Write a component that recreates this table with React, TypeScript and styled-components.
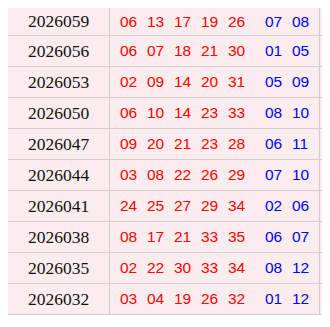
import React from 'react';
import styled, { createGlobalStyle } from 'styled-components';

const Global = createGlobalStyle`
  body {
    margin: 8px;
    background: #fff;
  }
`;

const Card = styled.div`
  width: 314px;
  overflow: hidden;
  background: #fbeded;
  box-shadow: 0 2px 6px rgba(0, 0, 0, 0.12);
`;

const Row = styled.div`
  display: grid;
  grid-template-columns: 102px 210px 40px;
  height: 31px;
  border-bottom: 1px solid #d3cdcd;
  box-sizing: border-box;
  width: 352px;

  &:first-child {
    height: 28px;
  }
`;

const Issue = styled.div`
  display: flex;
  align-items: center;
  justify-content: center;
  border-right: 1px solid #d3cdcd;
  font-family: 'Liberation Serif', serif;
  font-size: 17.5px;
  color: #111;
`;

const Balls = styled.div`
  display: flex;
  align-items: center;
  gap: 10px;
  padding-left: 10px;
  border-right: 1px solid #d3cdcd;
`;

const Ball = styled.span<{ $blue?: boolean; $first?: boolean }>`
  width: 17px;
  font-family: 'Liberation Sans', sans-serif;
  font-size: 15.5px;
  color: ${(p) => (p.$blue ? '#0000ff' : '#ff0000')};
  margin-left: ${(p) => (p.$first ? '10px' : '0')};
`;

const data: [string, string[], string[]][] = [
  ['2026059', ['06', '13', '17', '19', '26'], ['07', '08']],
  ['2026056', ['06', '07', '18', '21', '30'], ['01', '05']],
  ['2026053', ['02', '09', '14', '20', '31'], ['05', '09']],
  ['2026050', ['06', '10', '14', '23', '33'], ['08', '10']],
  ['2026047', ['09', '20', '21', '23', '28'], ['06', '11']],
  ['2026044', ['03', '08', '22', '26', '29'], ['07', '10']],
  ['2026041', ['24', '25', '27', '29', '34'], ['02', '06']],
  ['2026038', ['08', '17', '21', '33', '35'], ['06', '07']],
  ['2026035', ['02', '22', '30', '33', '34'], ['08', '12']],
  ['2026032', ['03', '04', '19', '26', '32'], ['01', '12']],
];

export default function App() {
  return (
    <>
      <Global />
      <Card>
        {data.map(([issue, reds, blues]) => (
          <Row key={issue}>
            <Issue>{issue}</Issue>
            <Balls>
              {reds.map((n, i) => (
                <Ball key={'r' + i}>{n}</Ball>
              ))}
              {blues.map((n, i) => (
                <Ball key={'b' + i} $blue $first={i === 0}>
                  {n}
                </Ball>
              ))}
            </Balls>
            <div />
          </Row>
        ))}
      </Card>
    </>
  );
}
